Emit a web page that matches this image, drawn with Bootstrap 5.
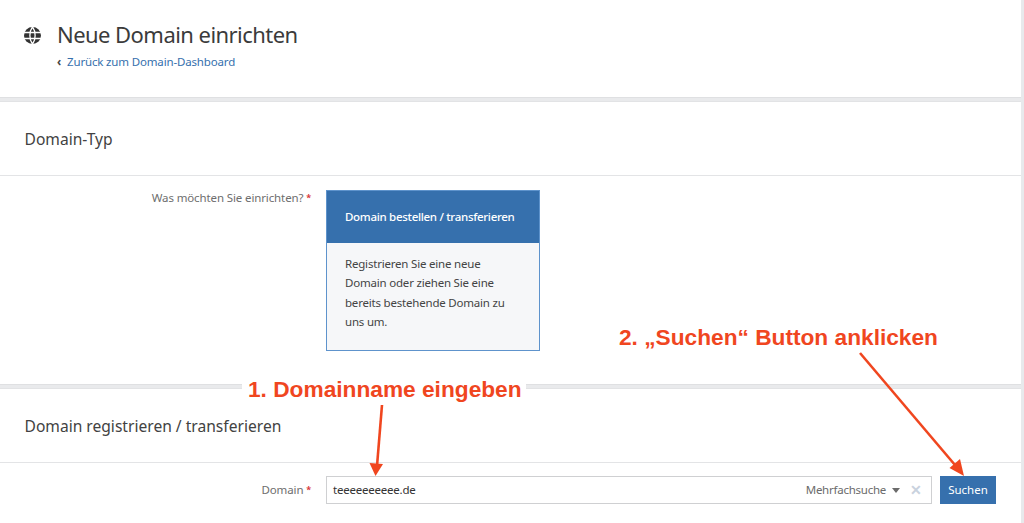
<!DOCTYPE html>
<html lang="de">
<head>
<meta charset="utf-8">
<title>Neue Domain einrichten</title>
<link href="https://cdn.jsdelivr.net/npm/bootstrap@5.3.0/dist/css/bootstrap.min.css" rel="stylesheet">
<style>
html,body{height:523px;overflow:hidden}
body{background:#fff;font-family:"Noto Sans","Liberation Sans",sans-serif;color:#3d3d3d;font-size:11.5px}
.pageframe{position:relative;height:523px;overflow:hidden;border-right:3px solid #e8e9ec}
.panelhead{height:97px;padding:20px 0 0 24px;gap:16px}
.globeicon{width:17px;height:17px;margin-top:7px;flex:none}
.pagetitle{font-size:22px;letter-spacing:-.55px;line-height:28px;font-weight:400;margin:0;color:#3b3b3b}
.backlink{font-size:11.5px;letter-spacing:-.16px;line-height:16px;color:#3670ad;text-decoration:none;display:block;margin-top:6px}
.backchev{color:#444;margin-right:6px;font-weight:700}
.sepband{height:5px;background:#e9eaec;border-top:1px solid #dfe0e2;border-bottom:1px solid #e2e3e5}
.sectitle{font-size:15.6px;line-height:20px;font-weight:400;margin:0;color:#424242;padding:0 24.5px;border-bottom:1px solid #e3e4e6;display:flex;align-items:center}
.h74{height:74px}
.typebody{height:208px;padding-top:14px}
.fieldlabel{width:311px;text-align:right;color:#6e6e6e;flex:none;margin-right:15px;line-height:16px;letter-spacing:-.12px}
.req{color:#d9383a;font-weight:700;font-size:9px;vertical-align:1px}
.typecard{width:214px;height:161px;border:1px solid #5e93cc;background:#f6f7f9}
.typecardhead{height:52px;background:#3670ad;color:#fff;font-size:11.5px;font-weight:500;letter-spacing:-.3px;padding-left:18px;display:flex;align-items:center}
.typecardbody{padding:11px 18px;line-height:19.3px;font-size:11.5px;letter-spacing:-.2px;color:#444}
.searchrow{padding-top:13px}
.domainlabel{line-height:28px}
.searchbox{width:606px;height:28px;border:1px solid #cfd0d2;padding:0 9px 0 6px;line-height:26px;color:#333;flex:none;letter-spacing:-.22px}
.multi{color:#6b6b6b;font-size:11.5px;letter-spacing:-.25px}
.caretmark{width:0;height:0;border-left:4.5px solid transparent;border-right:4.5px solid transparent;border-top:5px solid #6b6b6b;margin:0 10px 0 6px}
.clearmark{color:#c9d2de;font-size:14px;font-weight:700;line-height:1;letter-spacing:0}
.searchbtn{width:56px;height:28px;margin-left:8px;background:#3670ad;border:0;border-radius:0;color:#fff;font-size:11.5px;padding:0}
.note{position:absolute;font-family:"Liberation Sans",Arial,sans-serif;font-weight:700;font-size:22.7px;line-height:26px;color:#f0461f;white-space:nowrap;background:#fff}
.note1{left:242px;top:376px;padding:0 4px 0 6px}
.note2{left:619px;top:324px}
.arrows{position:absolute;left:0;top:0;width:1024px;height:523px;pointer-events:none}
</style>
</head>
<body>
<div class="pageframe">
  <header class="panelhead d-flex">
    <svg class="globeicon" viewBox="0 0 17 17" aria-hidden="true">
      <circle cx="8.5" cy="8.5" r="8.5" fill="#333"/>
      <path d="M0 5.5H17M0 11.5H17M8.5 0C5 4 5 13 8.5 17M8.5 0C12 4 12 13 8.5 17" fill="none" stroke="#fff" stroke-width="1.3"/>
    </svg>
    <div>
      <h1 class="pagetitle">Neue Domain einrichten</h1>
      <a class="backlink" href="#"><span class="backchev">‹</span>Zurück zum Domain-Dashboard</a>
    </div>
  </header>
  <div class="sepband"></div>
  <section>
    <h2 class="sectitle h74">Domain-Typ</h2>
    <div class="typebody d-flex">
      <div class="fieldlabel">Was möchten Sie einrichten? <span class="req">*</span></div>
      <div class="typecard">
        <div class="typecardhead">Domain bestellen / transferieren</div>
        <div class="typecardbody">Registrieren Sie eine neue Domain oder ziehen Sie eine bereits bestehende Domain zu uns um.</div>
      </div>
    </div>
  </section>
  <div class="sepband"></div>
  <section>
    <h2 class="sectitle h74">Domain registrieren / transferieren</h2>
    <div class="searchrow d-flex">
      <div class="fieldlabel domainlabel">Domain <span class="req">*</span></div>
      <div class="searchbox d-flex align-items-center">
        <span class="flex-grow-1">teeeeeeeeee.de</span>
        <span class="multi">Mehrfachsuche</span>
        <span class="caretmark"></span>
        <span class="clearmark">✕</span>
      </div>
      <button class="btn searchbtn" type="button">Suchen</button>
    </div>
  </section>
  <div class="note note1">1. Domainname eingeben</div>
  <div class="note note2">2. „Suchen“ Button anklicken</div>
  <svg class="arrows" viewBox="0 0 1024 523" aria-hidden="true">
    <g stroke="#f0461f" stroke-width="2.6" fill="#f0461f">
      <path d="M382 405L377 466" fill="none"/>
      <path d="M375.5 476L369.5 463L383 464Z" stroke-width="0"/>
      <path d="M860 353L955 465" fill="none"/>
      <path d="M964 476L949.5 468L960 459Z" stroke-width="0"/>
    </g>
  </svg>
</div>
</body>
</html>
